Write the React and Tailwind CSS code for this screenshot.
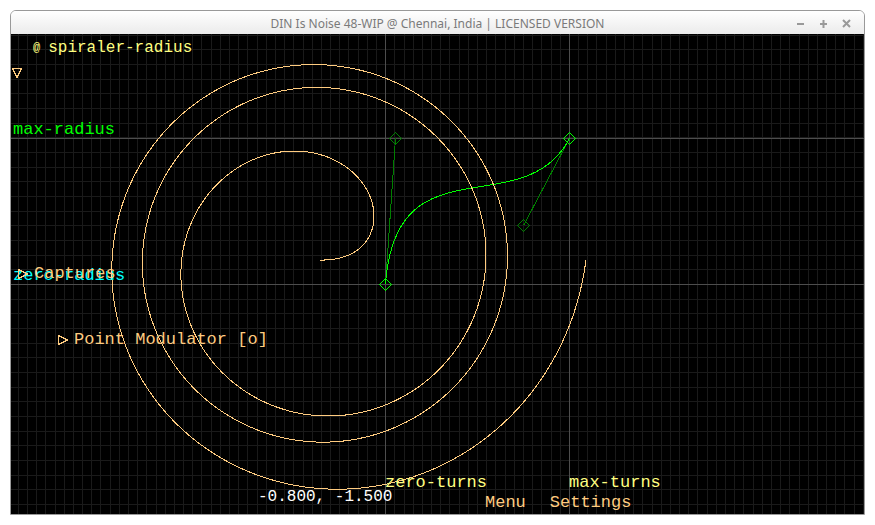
// curve editor: origin = (zero-turns, zero-radius), far corner = (max-turns, max-radius)
const ZERO = { x: 374, y: 250 };
const MAX = { x: 558, y: 104 };
const TAN1 = { x: 384, y: 104 };
const TAN2 = { x: 512, y: 191 };

const CENTER = { x: 308.4, y: 225.6 };
const TURNS = 3;
const RADIUS = 266;

const COLS = Array.from({ length: 300 }, (_, k) => Math.round(374.2 + (k - 40) * 9.185));
const ROWS = Array.from({ length: 120 }, (_, k) => Math.round(103.33 + ((k - 7) * 44) / 3));

function bezier(t) {
  const u = 1 - t;
  const mix = (a, b, c, d) => u * u * u * a + 3 * u * u * t * b + 3 * u * t * t * c + t * t * t * d;
  return {
    x: mix(ZERO.x, TAN1.x, TAN2.x, MAX.x),
    y: mix(ZERO.y, TAN1.y, TAN2.y, MAX.y),
  };
}

// the curve drives radius (y) against number of turns (x)
function spiralPoints() {
  const pts = [];
  for (let i = 0; i <= 600; i++) {
    const p = bezier(i / 600);
    const a = (TURNS * 2 * Math.PI * (p.x - ZERO.x)) / (MAX.x - ZERO.x);
    const r = (RADIUS * (ZERO.y - p.y)) / (ZERO.y - MAX.y);
    pts.push(`${(CENTER.x + r * Math.cos(a)).toFixed(2)},${(CENTER.y - r * Math.sin(a)).toFixed(2)}`);
  }
  return pts.join(' ');
}

function Diamond({ at, color }) {
  return (
    <path d={`M${at.x - 6} ${at.y}L${at.x} ${at.y - 6}L${at.x + 6} ${at.y}L${at.x} ${at.y + 6}Z`} stroke={color}/>
  );
}

function Plot() {
  return (
    <svg className="absolute inset-0 w-full h-full" fill="none" aria-hidden="true">
      <g shapeRendering="crispEdges">
        <g fill="#1a1a1a">
          {COLS.map(x => <rect key={x} x={x} y="0" width="1" height="100%"/>)}
          {ROWS.map(y => <rect key={y} x="0" y={y} width="100%" height="1"/>)}
        </g>
        <g fill="#4d4d4d">
          <rect x={ZERO.x} y="0" width="1" height="100%"/>
          <rect x={MAX.x} y="0" width="1" height="100%"/>
          <rect x="0" y={ZERO.y} width="100%" height="1"/>
          <rect x="0" y={MAX.y} width="100%" height="1"/>
        </g>
        <g transform="translate(.5 .5)">
          <path d={`M${ZERO.x} ${ZERO.y}L${TAN1.x} ${TAN1.y}M${MAX.x} ${MAX.y}L${TAN2.x} ${TAN2.y}`} stroke="#008000"/>
          <Diamond at={TAN1} color="#008000"/>
          <Diamond at={TAN2} color="#008000"/>
          <path d={`M${ZERO.x} ${ZERO.y}C${TAN1.x} ${TAN1.y} ${TAN2.x} ${TAN2.y} ${MAX.x} ${MAX.y}`} stroke="#00ff00"/>
          <Diamond at={ZERO} color="#00ff00"/>
          <Diamond at={MAX} color="#00ff00"/>
          <polyline points={spiralPoints()} stroke="#ffcc80"/>
        </g>
      </g>
    </svg>
  );
}

function Arrow({ down }) {
  return (
    <svg width="10" height="10" viewBox="0 0 10 10" fill="none" stroke="currentColor" shapeRendering="crispEdges" aria-hidden="true">
      <path d={down ? 'M.5 .5H9.5L5 9.5Z' : 'M.5 .5V9.5L9.5 5Z'}/>
    </svg>
  );
}

function WindowButton({ label, d }) {
  return (
    <button aria-label={label}>
      <svg width="9" height="9" viewBox="0 0 9 9" fill="none" stroke="currentColor" strokeWidth="2">
        <path d={d}/>
      </svg>
    </button>
  );
}

function TitleBar() {
  return (
    <header className="flex items-center h-[23px] px-3 pt-0.5 bg-linear-to-b from-white to-[#ebebeb] text-[#7a7a7a]">
      <div className="w-16"></div>
      <h1 className="flex-1 text-center text-[12px] leading-4 font-['Noto_Sans',sans-serif]">
        DIN Is Noise 48-WIP @ Chennai, India | LICENSED VERSION
      </h1>
      <div className="flex justify-end gap-[14px] w-16 pr-px text-[#999999]">
        <WindowButton label="Minimize" d="M1 5H8"/>
        <WindowButton label="Maximize" d="M1 5H8M4.5 1V9"/>
        <WindowButton label="Close" d="M1 1L8 8M8 1L1 8"/>
      </div>
    </header>
  );
}

export default function App() {
  return (
    <div className="flex flex-col min-h-screen p-[10px] bg-white">
      <div className="flex flex-col flex-1 border border-[#999999] rounded-t-md overflow-hidden">
        <TitleBar/>
        <main className="relative flex-1 bg-black overflow-hidden text-[17px] leading-5 whitespace-nowrap text-[#ffcc80] font-['Liberation_Mono',monospace]">
          <Plot/>

          <div className="absolute left-[22px] top-[4px] flex items-center gap-2 text-[16px] text-[#ffff80]">
            <span className="text-[12px]">@</span>
            <span>spiraler-radius</span>
          </div>
          <button className="absolute left-[1px] top-[34px]" aria-label="Collapse"><Arrow down/></button>

          {/* axis labels */}
          <span className="absolute left-[2px] top-[86px] text-[#00ff00]">max-radius</span>
          <span className="absolute left-[2px] top-[232px] text-[#00ffff]">zero-radius</span>
          <span className="absolute left-[374px] top-[439px] text-[#ffff80]">zero-turns</span>
          <span className="absolute left-[558px] top-[439px] text-[#ffff80]">max-turns</span>

          {/* menus */}
          <button className="absolute left-[7px] top-[230px] flex items-center gap-1.5"><Arrow/>Captures</button>
          <button className="absolute left-[47px] top-[296px] flex items-center gap-1.5"><Arrow/>Point Modulator [o]</button>

          <span className="absolute left-[247px] top-[453px] text-[16px] text-white">-0.800, -1.500</span>
          <div className="absolute left-[474px] top-[459px] flex gap-6">
            <button>Menu</button>
            <button>Settings</button>
          </div>
        </main>
      </div>
    </div>
  );
}
